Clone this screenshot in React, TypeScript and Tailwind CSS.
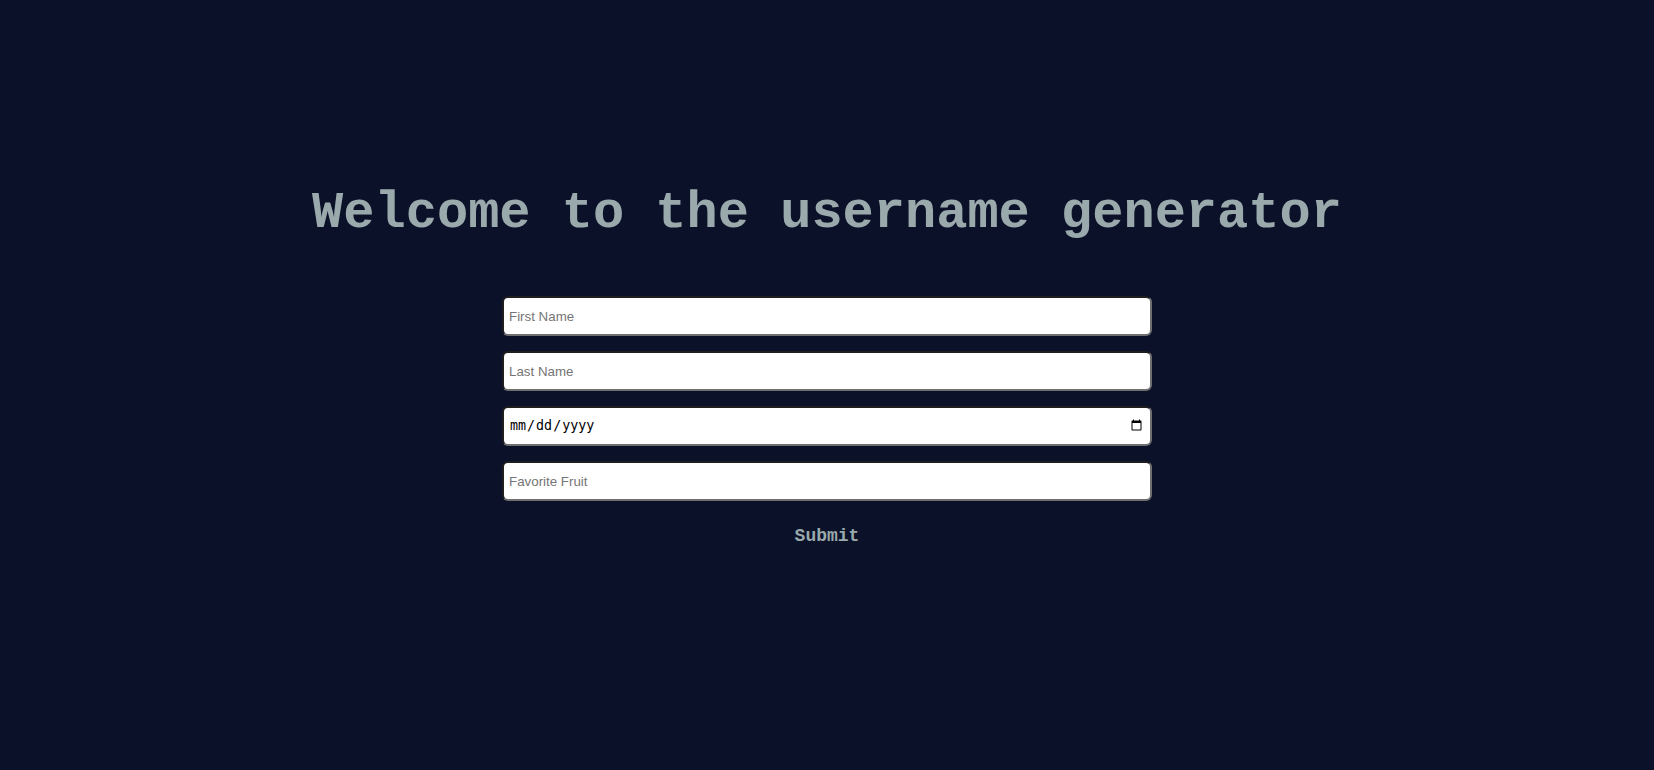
import { useState } from "react";

const inputBase =
  "h-[40px] w-[650px] rounded-[6px] border-2 border-t-[#1e1e1e] border-l-[#1e1e1e] border-b-[#6f6f6f] border-r-[#6f6f6f] bg-white px-[5px] text-[13.33px] text-black outline-none placeholder:text-[#757575]";

const mono = "[font-family:'Courier_New',Courier,'Nimbus_Mono_PS','Nimbus_Mono_L',FreeMono,'Liberation_Mono',monospace]";

export default function App() {
  const [form, setForm] = useState({ first: "", last: "", dob: "", fruit: "" });

  const set = (k: keyof typeof form) => (e: React.ChangeEvent<HTMLInputElement>) =>
    setForm((f) => ({ ...f, [k]: e.target.value }));

  return (
    <div className="min-h-[770px] w-full bg-[#0b1129]">
      <div className="flex flex-col items-center pt-[184px]">
        <h1 className={`text-[52px] font-bold leading-[59px] text-[#9aa9ab] ${mono}`}>
          Welcome to the username generator
        </h1>

        <form
          className="mt-[53px] flex flex-col items-center gap-[15px]"
          onSubmit={(e) => e.preventDefault()}
        >
          <input
            type="text"
            placeholder="First Name"
            value={form.first}
            onChange={set("first")}
            className={`${inputBase} [font-family:'Liberation_Sans',Arial,sans-serif]`}
          />
          <input
            type="text"
            placeholder="Last Name"
            value={form.last}
            onChange={set("last")}
            className={`${inputBase} [font-family:'Liberation_Sans',Arial,sans-serif]`}
          />
          <input
            type="date"
            value={form.dob}
            onChange={set("dob")}
            className={`${inputBase} [font-family:'DejaVu_Sans_Mono',monospace]`}
          />
          <input
            type="text"
            placeholder="Favorite Fruit"
            value={form.fruit}
            onChange={set("fruit")}
            className={`${inputBase} [font-family:'Liberation_Sans',Arial,sans-serif]`}
          />
          <button
            type="submit"
            className={`mt-[10px] cursor-pointer bg-transparent text-[18px] font-bold leading-[20px] text-[#9aa9ab] ${mono}`}
          >
            Submit
          </button>
        </form>
      </div>
    </div>
  );
}
